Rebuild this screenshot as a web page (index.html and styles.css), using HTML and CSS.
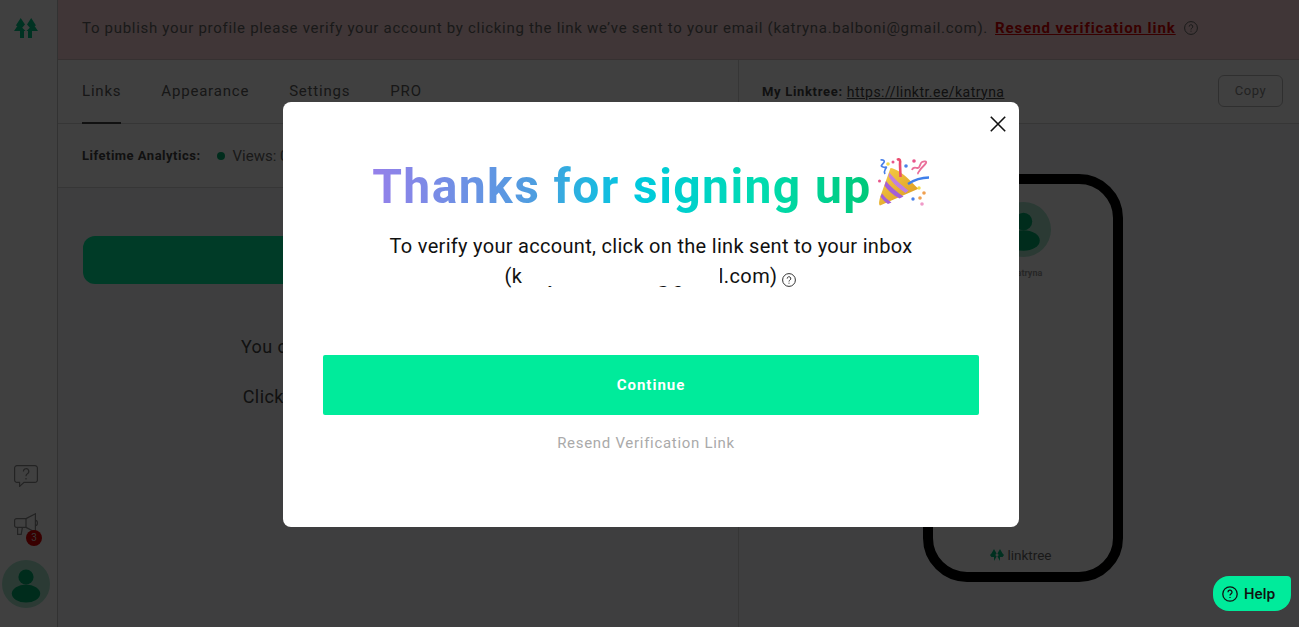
FILE: index.html
```html
<!DOCTYPE html>
<html lang="en">
<head>
<meta charset="utf-8">
<title>Linktree</title>
<link rel="stylesheet" href="styles.css">
</head>
<body>
<div class="app">
  <aside class="sidebar">
    <svg class="logo" viewBox="0 0 24 20" width="24" height="20"><path fill="#00c888" d="M6.700 0L11 6.600 8.200 9.800 11.600 13H10v7H6v-7H0l3.400-5L1.800 7.600zM17.200 0L22 7.600 20.600 8l3.400 5h-6v7h-4v-7h-1.600l3.400-3.200L13 6.600z"/></svg>
    <div class="side-spacer"></div>
    <svg class="side-icon" viewBox="0 0 24 22" width="24" height="22" fill="none" stroke="#8a8a8a" stroke-width="1.200"><path d="M3 .6h18a2.400 2.400 0 0 1 2.400 2.400v12a2.400 2.400 0 0 1-2.400 2.400H10l-4.400 4v-4H3A2.400 2.400 0 0 1 .6 15V3A2.400 2.400 0 0 1 3 .6z"/><path d="M9.400 6.400a2.700 2.700 0 1 1 4 2.400c-1 .6-1.400 1.100-1.400 2.400"/><path d="M12 13v1.400"/></svg>
    <div class="megaphone">
      <svg viewBox="0 0 24 24" width="24" height="24" fill="none" stroke="#8a8a8a" stroke-width="1.200"><path d="M2.600 5.600h9.400v8.800H2.600a2 2 0 0 1-2-2V7.600a2 2 0 0 1 2-2z"/><path d="M12 5.600L21.400.8v18.400L12 14.400"/><path d="M21.400 7.400c1.600 0 2 1.200 2 2.600s-.4 2.600-2 2.600"/><path d="M3.600 14.400v7h3.600l1.200-7"/></svg>
      <span class="badge">3</span>
    </div>
    <div class="avatar side-avatar">
      <svg viewBox="0 0 48 48" width="48" height="48"><circle cx="24" cy="17" r="7.600" fill="#00b070"/><ellipse cx="24" cy="33.600" rx="14.200" ry="9" fill="#00b070"/></svg>
    </div>
  </aside>
  <div class="main">
    <div class="banner">
      <span>To publish your profile please verify your account by clicking the link we’ve sent to your email (katryna.balboni@gmail.com).</span>
      <a class="resend" href="#">Resend verification link</a>
      <svg class="q-icon" viewBox="0 0 14 14" width="14" height="14" fill="none" stroke="#666" stroke-width="1"><circle cx="7" cy="7" r="6.400"/><path d="M5.200 5.600a1.800 1.800 0 1 1 2.700 1.500c-.6.400-.9.700-.9 1.400M7 9.700v1"/></svg>
    </div>
    <div class="columns">
      <section class="left">
        <nav class="tabs">
          <a class="tab active" href="#">Links</a>
          <a class="tab" href="#">Appearance</a>
          <a class="tab" href="#">Settings</a>
          <a class="tab" href="#">PRO</a>
        </nav>
        <div class="analytics">
          <strong>Lifetime Analytics:</strong>
          <span class="dot"></span>
          <span class="views">Views: 0</span>
        </div>
        <div class="links">
          <div class="add-bar"></div>
          <p class="empty first">You currently don’t have any links yet.</p>
          <p class="empty">Click the button above to get started.</p>
        </div>
      </section>
      <section class="right">
        <div class="share">
          <strong>My Linktree:</strong>
          <a class="share-url" href="#">https://linktr.ee/katryna</a>
          <button class="copy" type="button">Copy</button>
        </div>
        <div class="preview">
          <div class="phone">
            <div class="avatar phone-avatar">
              <svg viewBox="0 0 48 48" width="55" height="55"><circle cx="24" cy="17" r="7.600" fill="#00b070"/><ellipse cx="24" cy="33.600" rx="14.200" ry="9" fill="#00b070"/></svg>
            </div>
            <div class="phone-name">@katryna</div>
            <div class="phone-foot">
              <svg viewBox="0 0 14 12" width="14" height="12"><path fill="#00c080" d="M4 0l2.600 4.500L5.200 6l1.400 1.400L4 12V8H1.400L0 6l1.400-1.600zM10 0l2.600 4.400L14 6l-1.400 2H10v4L7.400 7.400 8.800 6 7.400 4.500z"/></svg>
              <span>linktree</span>
            </div>
          </div>
        </div>
      </section>
    </div>
  </div>
</div>

<div class="overlay">
  <div class="modal">
    <button class="close" type="button" aria-label="Close">
      <svg viewBox="0 0 16 16" width="16" height="16" fill="none" stroke="#111" stroke-width="1.600"><path d="M.8.8l14.400 14.400M15.200.8L.8 15.200"/></svg>
    </button>
    <h1 class="title"><span class="title-text">Thanks for signing up</span><svg class="popper" viewBox="0 0 52 50" width="52" height="50">
      <defs><linearGradient id="cone" x1="0" y1="0" x2="1" y2="1"><stop offset="0" stop-color="#f7d04a"/><stop offset="1" stop-color="#d9951c"/></linearGradient></defs>
      <path d="M3 48.500C1.500 47.500 2 44 3.500 39L13.500 11c4 0 12 5 18 11 5 5 9.500 10 10.500 9.500z" fill="url(#cone)"/>
      <path d="M9 24c4 5 11 11 17.500 15.500l-4 2C16 38 10.500 33 7.500 28.500z" fill="#a55fd6"/>
      <path d="M12.500 15.500c3.500 5 11 12 19 18l-3 2.500C21 31 14.500 25 11.500 19z" fill="#c07fe0"/>
      <path d="M5 36.500c2.500 3.500 6 6.500 9.500 9l-3.500 1.500c-3-2-5.500-4.500-7.500-7.500z" fill="#a55fd6"/>
      <path d="M20 3c3-2 3.500 1 3 4l.5 13" fill="none" stroke="#ea4b6e" stroke-width="2.600"/>
      <path d="M3.500 3c2.500-.5 5 .5 3 3S3 9 6 10s4-1 3 1-2.500 3-1 6" fill="none" stroke="#4a80e8" stroke-width="1.700"/>
      <path d="M35 13c1-4 4-2 6-2s2-5 4-6 5-1 4 1-5 5-6 7-3 3-1.500 4" fill="none" stroke="#ea6f9a" stroke-width="1.800"/>
      <path d="M31 27c6-4 13-6.500 21-6.500" fill="none" stroke="#3f7fea" stroke-width="2.400"/>
      <circle cx="29" cy="9" r="1.800" fill="#4a80e8"/><circle cx="11" cy="7" r="1.800" fill="#f4dd4c"/><circle cx="37" cy="4" r="1.800" fill="#e8558a"/><circle cx="16" cy="5" r="1.500" fill="#e8558a"/>
      <circle cx="42" cy="31" r="1.700" fill="#f4dd4c"/><circle cx="47" cy="36" r="1.800" fill="#f0a050"/><circle cx="43" cy="41" r="1.800" fill="#f0a050"/><circle cx="36" cy="42" r="1.700" fill="#4a80e8"/><circle cx="45" cy="47" r="1.800" fill="#f09ac8"/><circle cx="2.500" cy="24" r="1.500" fill="#e8558a"/>
    </svg></h1>
    <p class="verify">To verify your account, click on the link sent to your inbox</p>
    <p class="email"><span class="email-text">(katryna.balboni@gmail.com)<span class="mask"></span></span><svg class="q-icon email-q" viewBox="0 0 14 14" width="14" height="14" fill="none" stroke="#333" stroke-width="1"><circle cx="7" cy="7" r="6.400"/><path d="M5.200 5.600a1.800 1.800 0 1 1 2.700 1.500c-.6.400-.9.700-.9 1.400M7 9.700v1"/></svg></p>
    <button class="continue" type="button">Continue</button>
    <a class="resend-link" href="#">Resend Verification Link</a>
  </div>
</div>

<button class="help" type="button">
  <svg viewBox="0 0 16 16" width="16" height="16" fill="none" stroke="#111" stroke-width="1.300"><circle cx="8" cy="8" r="7.200"/><path d="M6 6.200a2 2 0 1 1 3 1.700c-.7.400-1 .8-1 1.600M8 11v1.100"/></svg>
  <span>Help</span>
</button>
</body>
</html>
```

FILE: styles.css
```css
* { box-sizing: border-box; }
html, body { margin: 0; height: 100%; overflow: hidden; }
body { font-family: Roboto, "Liberation Sans", sans-serif; color: #555; background: #f6f8fa; font-size: 15px; }
a { color: inherit; }
p, h1 { margin: 0; }
.app { display: flex; height: 627px; }

.sidebar { width: 58px; flex: none; border-right: 1px solid #c8c8c8; background: #fff; display: flex; flex-direction: column; align-items: center; padding: 18px 5px 0 0; }
.logo { display: block; flex: none; }
.side-spacer { flex: 1; }
.side-icon { display: block; flex: none; margin-bottom: 26px; }
.megaphone { position: relative; width: 24px; height: 24px; margin-bottom: 23px; }
.megaphone svg { display: block; }
.badge { position: absolute; left: 12px; top: 17px; width: 16px; height: 16px; border-radius: 50%; background: #e00000; color: #ddd; font-size: 10px; line-height: 16px; text-align: center; }
.avatar { border-radius: 50%; background: #aae8d0; display: flex; align-items: center; justify-content: center; }
.side-avatar { width: 48px; height: 48px; margin-bottom: 19px; }

.main { flex: 1; min-width: 0; display: flex; flex-direction: column; }
.banner { height: 60px; flex: none; background: #fdd8da; border-bottom: 1px solid #d8c4c4; display: flex; align-items: center; padding: 0 0 4px 24px; font-size: 15px; letter-spacing: .7px; color: #666; white-space: nowrap; }
.resend { margin-left: 7px; color: #e00000; font-weight: 700; letter-spacing: .93px; }
.q-icon { display: block; flex: none; }
.banner .q-icon { margin-left: 8px; }

.columns { flex: 1; display: flex; min-height: 0; }
.left { width: 681px; flex: none; border-right: 1px solid #d8d8d8; display: flex; flex-direction: column; }
.tabs { height: 64px; flex: none; background: #fff; border-bottom: 1px solid #d8d8d8; display: flex; gap: 40px; padding-left: 24px; }
.tab { position: relative; display: flex; align-items: center; padding-bottom: 1px; text-decoration: none; font-size: 15px; letter-spacing: .8px; color: #5c5c5c; }
.tab.active { border-bottom: 2px solid #444; height: 64px; padding-bottom: 0; }
.analytics { height: 64px; flex: none; background: #fff; border-bottom: 1px solid #d8d8d8; display: flex; align-items: center; padding-left: 24px; font-size: 13px; letter-spacing: .5px; color: #444; white-space: nowrap; }
.dot { width: 8px; height: 8px; margin-left: 16px; border-radius: 50%; background: #00b070; }
.views { margin-left: 8px; font-size: 15px; letter-spacing: 0; color: #666; }
.links { flex: 1; padding: 48px 24px 0 25px; text-align: center; font-size: 18px; color: #444; }
.add-bar { height: 48px; border-radius: 12px; background: #00eb9b; margin-bottom: 51px; }
.empty { line-height: 24px; margin-bottom: 26px; letter-spacing: .45px; white-space: nowrap; }

.right { flex: 1; min-width: 0; display: flex; flex-direction: column; }
.share { height: 64px; flex: none; background: #fff; border-bottom: 1px solid #d8d8d8; display: flex; align-items: center; padding: 0 16px 0 23px; font-size: 13px; letter-spacing: .68px; color: #444; white-space: nowrap; }
.share-url { margin-left: 4px; font-size: 14px; letter-spacing: .47px; }
.copy { margin-left: auto; margin-top: -2px; width: 65px; height: 32px; border: 1px solid #bbb; border-radius: 6px; background: #fff; font: inherit; letter-spacing: .6px; color: #888; }
.preview { flex: 1; padding: 50px 0 0 184px; }
.phone { width: 200px; height: 408px; border: 10px solid #000; border-radius: 44px; background: #fff; display: flex; flex-direction: column; align-items: center; padding-top: 18px; }
.phone-avatar { width: 55px; height: 55px; }
.phone-name { margin-top: 11px; font-size: 9px; font-weight: 700; color: #999; }
.phone-foot { margin-top: auto; margin-bottom: 9px; margin-left: -4px; display: flex; align-items: center; gap: 3px; font-size: 13.500px; color: #666; }

.overlay { position: fixed; inset: 0; background: rgba(0, 0, 0, .75); }
.modal { position: absolute; left: 283px; top: 102px; width: 736px; height: 425px; background: #fff; border-radius: 8px; padding: 57px 40px 0; display: flex; flex-direction: column; align-items: center; }
.close { position: absolute; top: 14px; right: 13px; width: 16px; height: 16px; padding: 0; border: 0; background: none; }
.close svg { display: block; }
.title { display: flex; align-items: center; height: 56px; font-size: 48px; font-weight: 700; line-height: 56px; letter-spacing: 1.42px; white-space: nowrap; margin-left: -1px; }
.title-text { background: linear-gradient(90deg, #9580ea 0%, #4f9de0 32%, #00c8e0 52%, #00dcb0 78%, #00c878 100%); -webkit-background-clip: text; background-clip: text; color: transparent; }
.popper { flex: none; margin-left: 5px; margin-top: -10px; }
.verify { margin-top: 17px; font-size: 20px; line-height: 28px; letter-spacing: .3px; color: #111; white-space: nowrap; }
.email { margin-top: 2px; margin-left: -1px; display: flex; align-items: center; font-size: 20px; line-height: 28px; letter-spacing: .38px; color: #111; }
.email-text { position: relative; white-space: nowrap; }
.mask { position: absolute; left: 18px; right: 57px; top: 0; height: 24px; background: #fff; }
.email-q { margin-left: 5px; margin-top: 7px; }
.continue { width: 656px; height: 60px; margin-top: 65px; border: 0; border-radius: 2px; background: #00eb9b; font: 700 15px Roboto, sans-serif; letter-spacing: 1px; color: #fff; }
.resend-link { margin-top: 19px; margin-left: -10px; font-size: 15px; letter-spacing: .7px; color: #aaa; text-decoration: none; }

.help { position: fixed; right: 8px; bottom: 16px; width: 78px; height: 35px; border: 0; border-radius: 16px 4px 16px 16px; background: #00eb9b; display: flex; align-items: center; gap: 6px; padding: 0 0 0 9px; font: 600 14px Inter, sans-serif; color: #111; }
.help svg { display: block; flex: none; }
```
